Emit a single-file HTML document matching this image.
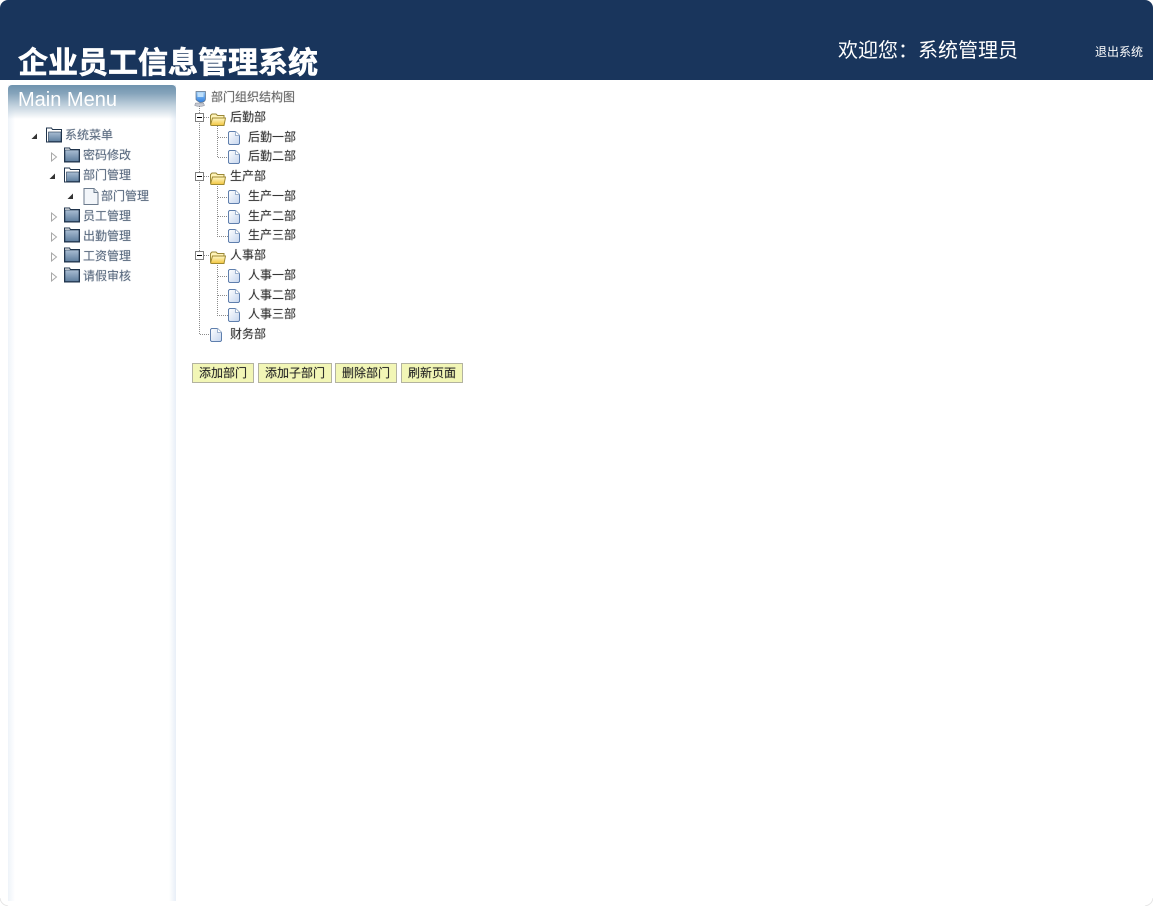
<!DOCTYPE html>
<html lang="zh"><head><meta charset="utf-8"><title>企业员工信息管理系统</title>
<style>
html,body{margin:0;padding:0;background:#fff}
body{width:1153px;height:906px;position:relative;overflow:hidden;font-family:"Liberation Sans","Noto Sans CJK SC",sans-serif;font-size:12px}
.a{position:absolute;white-space:nowrap}
#hd{left:0;top:0;width:1153px;height:80px;background:#19355c;border-radius:8px 8px 0 0}
#side{left:8px;top:85px;width:168px;height:816px;background:linear-gradient(90deg,#eef3f9 0,#fff 7px,#fff 161px,#e8eff7 168px)}
#mh{left:8px;top:85px;width:168px;height:34px;border-radius:4px 4px 0 0;background:linear-gradient(180deg,#6f93ae 0,#86a4bb 25%,#c3d3df 62%,rgba(255,255,255,0) 100%)}
.m{color:#5b6b80;line-height:16px;height:16px;margin-top:-1px;text-shadow:0 0 1px rgba(91,107,128,.45)}
.t{color:#333;line-height:16px;height:16px;margin-top:-1px;text-shadow:0 0 1px rgba(51,51,51,.35)}
.b{top:363px;height:20px;box-sizing:border-box;background:#f2f6b6;border:1px solid #b3b3a0;color:#222;text-align:center;line-height:18px;text-shadow:0 0 1px rgba(34,34,34,.3)}
svg{position:absolute;overflow:visible}
</style></head><body>
<svg width="0" height="0" style="position:absolute"><defs>
<linearGradient id="fg" x1="0" y1="0" x2="0" y2="1"><stop offset="0" stop-color="#a9bdd3"/><stop offset="1" stop-color="#5f7f9f"/></linearGradient>
<linearGradient id="yg" x1="0" y1="0" x2="0" y2="1"><stop offset="0" stop-color="#fff8c8"/><stop offset="1" stop-color="#f2c53e"/></linearGradient>
<linearGradient id="dg" x1="0" y1="0" x2="1" y2="1"><stop offset="0" stop-color="#fff"/><stop offset="1" stop-color="#c5d5ee"/></linearGradient>
<linearGradient id="mg" x1="0" y1="0" x2="0" y2="1"><stop offset="0" stop-color="#9ccbf6"/><stop offset="1" stop-color="#2f7fe0"/></linearGradient>
<symbol id="fd" viewBox="0 0 16 16"><path d="M.5 2.500V1h5l1 1.500h9V15H.5z" fill="#fff" stroke="#20344c"/><rect x="1" y="3" width="14" height="11.500" fill="url(#fg)" stroke="#20344c" stroke-width=".6"/></symbol>
<symbol id="fo" viewBox="0 0 16 16"><path d="M.5 14.500V1h5l1 1.500h9V15H.5z" fill="#fff" stroke="#20344c"/><rect x="2.500" y="5" width="12.500" height="9.500" fill="url(#fg)" stroke="#20344c" stroke-width=".6"/></symbol>
<symbol id="yf" viewBox="0 0 16 13"><path d="M.5 11V2.500L2 1h4l1.500 1.500H14V5" fill="#fff3b8" stroke="#9a8838"/><path d="M.5 12 2.500 5H15.500L14 12.500H1.500z" fill="url(#yg)" stroke="#a08a30"/></symbol>
<symbol id="dc" viewBox="0 0 12 14"><path d="M.5 1.500 1.500.5h6l4 4v8l-1 1h-9l-1-1z" fill="url(#dg)" stroke="#5f7fad"/><path d="M7.500.500v4h4" fill="#fff" stroke="#9fb3cf"/></symbol>
<symbol id="pg" viewBox="0 0 16 17"><path d="M1 .500h10l4 4V16.500H1z" fill="#f3f6fa" stroke="#6b7a8c"/><path d="M11 .500v4h4" fill="#dfe5ec" stroke="#6b7a8c"/></symbol>
<symbol id="op" viewBox="0 0 8 8"><path d="M7 1.500V7H1.500z" fill="#333"/></symbol>
<symbol id="cl" viewBox="0 0 8 10"><path d="M1.500 1 6.500 5 1.500 9z" fill="#fff" stroke="#a8a8a8"/></symbol>
<symbol id="mn" viewBox="0 0 9 9"><rect x=".5" y=".5" width="8" height="8" fill="#fff" stroke="#808080"/><path d="M2 4.500h5" stroke="#000"/></symbol>
</defs></svg>

<div class="a" id="hd"></div>
<div class="a" style="left:18px;top:44px;font-size:30px;font-weight:700;line-height:40px;color:#fff;-webkit-text-stroke:.6px #fff">企业员工信息管理系统</div>
<div class="a" style="left:838px;top:37px;font-size:20px;line-height:28px;color:#fff">欢迎您：系统管理员</div>
<div class="a" style="left:1095px;top:44px;line-height:16px;color:#fff">退出系统</div>

<div class="a" id="side"></div>
<div class="a" id="mh"></div>
<div class="a" style="left:18px;top:88px;font-size:20px;line-height:24px;color:#fff">Main Menu</div>

<svg style="left:30px;top:132px" width="8" height="8"><use href="#op"/></svg>
<svg style="left:46px;top:127px" width="16" height="16"><use href="#fo"/></svg>
<div class="a m" style="left:65px;top:128px">系统菜单</div>
<svg style="left:50px;top:152px" width="8" height="10"><use href="#cl"/></svg>
<svg style="left:64px;top:147px" width="16" height="16"><use href="#fd"/></svg>
<div class="a m" style="left:83px;top:148px">密码修改</div>
<svg style="left:48px;top:172px" width="8" height="8"><use href="#op"/></svg>
<svg style="left:64px;top:167px" width="16" height="16"><use href="#fo"/></svg>
<div class="a m" style="left:83px;top:168px">部门管理</div>
<svg style="left:66px;top:192px" width="8" height="8"><use href="#op"/></svg>
<svg style="left:83px;top:188px" width="16" height="17"><use href="#pg"/></svg>
<div class="a m" style="left:101px;top:189px">部门管理</div>
<svg style="left:50px;top:212px" width="8" height="10"><use href="#cl"/></svg>
<svg style="left:64px;top:207px" width="16" height="16"><use href="#fd"/></svg>
<div class="a m" style="left:83px;top:209px">员工管理</div>
<svg style="left:50px;top:232px" width="8" height="10"><use href="#cl"/></svg>
<svg style="left:64px;top:227px" width="16" height="16"><use href="#fd"/></svg>
<div class="a m" style="left:83px;top:229px">出勤管理</div>
<svg style="left:50px;top:252px" width="8" height="10"><use href="#cl"/></svg>
<svg style="left:64px;top:247px" width="16" height="16"><use href="#fd"/></svg>
<div class="a m" style="left:83px;top:249px">工资管理</div>
<svg style="left:50px;top:272px" width="8" height="10"><use href="#cl"/></svg>
<svg style="left:64px;top:267px" width="16" height="16"><use href="#fd"/></svg>
<div class="a m" style="left:83px;top:269px">请假审核</div>

<svg style="left:0;top:0" width="300" height="350">
<g stroke="#8c8c8c" stroke-width="1" stroke-dasharray="1 1" fill="none">
<path d="M199.500 106V113M199.500 123V172M199.500 182V251M199.500 261V334.500H209"/>
<path d="M204 117.500H210M204 176.500H210M204 255.500H210"/>
<path d="M217.500 124V157.500H228M218 137.500H228"/>
<path d="M217.500 184V236.500H228M218 197.500H228M218 216.500H228"/>
<path d="M217.500 263V315.500H228M218 276.500H228M218 295.500H228"/>
</g>
<path d="M196 91.500h9.500v7c0 1.500-1 3-2.500 3.500l-3 .5c-1.500-1-3-1.500-4-3z" fill="url(#mg)" stroke="#5f7288" stroke-width=".7"/>
<path d="M197.500 92.500h6v4.500h-6z" fill="#bfe0fb"/>
<path d="M195.500 103h8l1 2.500c-1.500 .7-3 .8-5 .8s-3.500-.2-4.800-.8z" fill="#c6c8d0" stroke="#7f8796" stroke-width=".5"/>
</svg>
<div class="a t" style="left:211px;top:90px;color:#666">部门组织结构图</div>

<svg style="left:195px;top:113px" width="9" height="9"><use href="#mn"/></svg>
<svg style="left:210px;top:113px" width="16" height="13"><use href="#yf"/></svg>
<div class="a t" style="left:230px;top:110px">后勤部</div>
<svg style="left:228px;top:131px" width="12" height="14"><use href="#dc"/></svg>
<div class="a t" style="left:248px;top:130px">后勤一部</div>
<svg style="left:228px;top:150px" width="12" height="14"><use href="#dc"/></svg>
<div class="a t" style="left:248px;top:149px">后勤二部</div>

<svg style="left:195px;top:172px" width="9" height="9"><use href="#mn"/></svg>
<svg style="left:210px;top:172px" width="16" height="13"><use href="#yf"/></svg>
<div class="a t" style="left:230px;top:169px">生产部</div>
<svg style="left:228px;top:190px" width="12" height="14"><use href="#dc"/></svg>
<div class="a t" style="left:248px;top:189px">生产一部</div>
<svg style="left:228px;top:210px" width="12" height="14"><use href="#dc"/></svg>
<div class="a t" style="left:248px;top:209px">生产二部</div>
<svg style="left:228px;top:229px" width="12" height="14"><use href="#dc"/></svg>
<div class="a t" style="left:248px;top:228px">生产三部</div>

<svg style="left:195px;top:251px" width="9" height="9"><use href="#mn"/></svg>
<svg style="left:210px;top:251px" width="16" height="13"><use href="#yf"/></svg>
<div class="a t" style="left:230px;top:248px">人事部</div>
<svg style="left:228px;top:269px" width="12" height="14"><use href="#dc"/></svg>
<div class="a t" style="left:248px;top:268px">人事一部</div>
<svg style="left:228px;top:289px" width="12" height="14"><use href="#dc"/></svg>
<div class="a t" style="left:248px;top:288px">人事二部</div>
<svg style="left:228px;top:308px" width="12" height="14"><use href="#dc"/></svg>
<div class="a t" style="left:248px;top:307px">人事三部</div>

<svg style="left:210px;top:328px" width="12" height="14"><use href="#dc"/></svg>
<div class="a t" style="left:230px;top:327px">财务部</div>

<div class="a b" style="left:192px;width:62px">添加部门</div>
<div class="a b" style="left:258px;width:74px">添加子部门</div>
<div class="a b" style="left:335px;width:62px">删除部门</div>
<div class="a b" style="left:401px;width:62px">刷新页面</div>

<svg style="left:0;top:898px" width="8" height="8"><path d="M0 0C.5 4 3 7 8 8" fill="none" stroke="#e4e4e4"/></svg>
<svg style="left:1145px;top:898px" width="8" height="8"><path d="M8 0C7.500 4 5 7 0 8" fill="none" stroke="#e4e4e4"/></svg>
</body></html>
